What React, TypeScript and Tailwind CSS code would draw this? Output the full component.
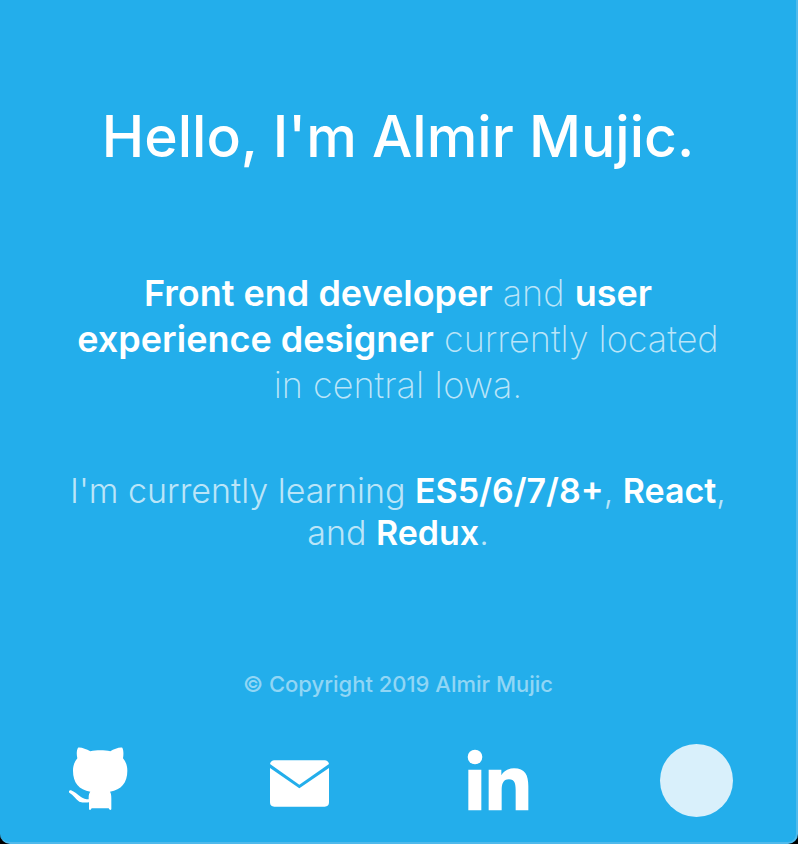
import React from "react";

function Octocat() {
  return (
    <svg viewBox="40 44 216 216" className="size-18" fill="currentColor" aria-hidden="true">
      <path d="M82 52C91 50 106 56 119 63C137 59 161 59 179 63C190 56 206 50 215 52C219 59 219 73 217 84C226 94 230 107 230 121C230 157 212 178 178 184C181 188 182 195 182 205V237Q178 242 174 234H123Q119 242 115 237V216C106 217 95 217 86 214C76 207 68 193 56 187C53 184 56 179 61 180C71 183 80 193 91 200C98 205 105 207 114 207V201C114 193 116 187 119 184C85 178 67 157 67 121C67 107 71 94 80 84C77 72 78 59 82 52Z" />
    </svg>
  );
}

function Mail() {
  return (
    <svg viewBox="38 44 216 216" className="size-18" fill="currentColor" aria-hidden="true">
      <path d="M59 101Q62 90 72 90H223Q233 90 236 101L147 163Z" />
      <path d="M59 113L147 174L236 113V216Q236 229 223 229H72Q59 229 59 216Z" />
    </svg>
  );
}

function LinkedIn() {
  return (
    <svg viewBox="65 44 216 216" className="size-18" fill="currentColor" aria-hidden="true">
      <circle cx="104" cy="80" r="22" />
      <path d="M84 118H123V240H84ZM145 118H183V135C190 122 203 114 221 114C254 114 264 134 264 168V240H226V180C226 160 223 147 206 147C188 147 184 161 184 180V240H145Z" />
    </svg>
  );
}

export default function App() {
  return (
    <div className="bg-black">
      <main className="flex min-h-screen flex-col rounded-b-[10px] border-r-2 border-b-2 border-[#4fbaec] bg-[#23aeeb] px-16 pt-[97px] text-center font-['Inter','Liberation_Sans',sans-serif] text-white/70">
        <h1 className="-mx-8 text-[57px] leading-[80px] font-medium text-white">Hello, I'm Almir Mujic.</h1>
        <p className="mt-[93px] text-[36px] leading-[46px] font-extralight">
          <strong className="font-semibold text-white">Front end developer</strong> and{" "}
          <strong className="font-semibold text-white">user experience designer</strong> currently located in central Iowa.
        </p>
        <p className="mt-[62px] text-[34px] leading-[42px] font-light">
          I'm currently learning <strong className="font-semibold text-white">ES5/6/7/8+</strong>,{" "}
          <strong className="font-semibold text-white">React</strong>, and{" "}
          <strong className="font-semibold text-white">Redux</strong>.
        </p>
        <footer className="mt-[114px]">
          <p className="text-[22px] leading-8 font-medium text-white/50">© Copyright 2019 Almir Mujic</p>
          <nav aria-label="Contact links" className="-mx-16 mt-11 grid grid-cols-4 place-items-center text-white">
            <a href="#github" aria-label="GitHub"><Octocat /></a>
            <a href="#email" aria-label="Email"><Mail /></a>
            <a href="#linkedin" aria-label="LinkedIn"><LinkedIn /></a>
            <button type="button" aria-label="Change theme" className="size-[73px] rounded-full bg-[#d9f0fb]" />
          </nav>
        </footer>
      </main>
    </div>
  );
}
